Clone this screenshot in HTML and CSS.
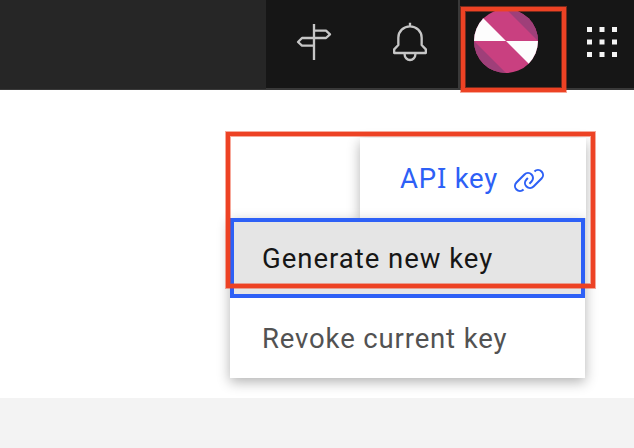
FILE: index.html
```html
<!DOCTYPE html>
<html lang="en">
<head>
<meta charset="utf-8">
<title>API key</title>
<link rel="stylesheet" href="styles.css">
</head>
<body>
<header class="header">
  <nav class="actions">
    <button class="action action-first" aria-label="Directions">
      <svg width="36" height="38" viewBox="108 69 108 114"><path d="M162 72V180M162 92H198L210 103L198 114H126L114 126L126 137H162"/></svg>
    </button>
    <button class="action" aria-label="Notifications">
      <svg width="36" height="40" viewBox="396 67 108 120"><path d="M450 69V81M402.500 160V149L415 136V114a35 34 0 0 1 70 0V136L497.500 149V160ZM434 161v4a16 16 0 0 0 32 0v-4"/></svg>
    </button>
    <button class="action action-user" aria-label="Account">
      <svg class="avatar" width="64" height="64" viewBox="-96 -96 192 192">
        <defs><clipPath id="disc"><circle r="96"/></clipPath></defs>
        <g clip-path="url(#disc)">
          <path fill="#c94080" d="M-96-96H96V96H-96Z"/>
          <path fill="#fdfdfd" d="M0 0H-96V-96ZM0 0H96V96Z"/>
          <path fill="#9f3f79" d="M0-96H96V0ZM-96 0L0 96H-96Z"/>
        </g>
      </svg>
    </button>
    <button class="action action-apps" aria-label="Applications">
      <svg class="dots" width="30" height="30" viewBox="0 0 30 30"><path d="M0 0h5v5H0zM12.500 0h5v5h-5zM25 0h5v5h-5zM0 12.500h5v5H0zM12.500 12.500h5v5h-5zM25 12.500h5v5h-5zM0 25h5v5H0zM12.500 25h5v5h-5zM25 25h5v5h-5z"/></svg>
    </button>
  </nav>
</header>
<main class="content">
  <div class="tab">
    <span class="tab-label">AP<span class="serif-i">I</span> key</span>
    <svg class="link" width="32" height="32" viewBox="0 0 32 32"><path d="M29.250,6.760a6,6,0,0,0-8.500,0l1.420,1.420a4,4,0,1,1,5.670,5.670l-8,8a4,4,0,1,1-5.670-5.660l1.410-1.420-1.410-1.420-1.420,1.420a6,6,0,0,0,0,8.500A6,6,0,0,0,17,25a6,6,0,0,0,4.270-1.760l8-8A6,6,0,0,0,29.250,6.760Z"/><path d="M4.190,24.820a4,4,0,0,1,0-5.670l8-8a4,4,0,0,1,5.670,0A3.940,3.940,0,0,1,19,14a4,4,0,0,1-1.170,2.850L15.710,19l1.420,1.420,2.120-2.120a6,6,0,0,0-8.510-8.510l-8,8a6,6,0,0,0,0,8.510A6,6,0,0,0,7,28a6.070,6.070,0,0,0,4.280-1.760L9.860,24.820A4,4,0,0,1,4.190,24.820Z"/></svg>
  </div>
  <ul class="menu">
    <li class="item item-active"><span class="label-generate">Generate new key</span></li>
    <li class="item"><span class="label-revoke">Revoke current key</span></li>
  </ul>
</main>
<div class="mark mark-avatar"></div>
<div class="mark mark-menu"></div>
</body>
</html>
```
FILE: styles.css
```css
* { box-sizing: border-box; }
body {
  margin: 0;
  height: 448px;
  overflow: hidden;
  background: #f3f3f3;
  font-family: Roboto, "Liberation Sans", sans-serif;
  font-size: 27.500px;
}
.header {
  display: flex;
  justify-content: flex-end;
  height: 90px;
  background: #262626;
  box-shadow: inset 0 -1px #393939;
}
.actions {
  display: flex;
  width: 368px;
  background: #161616;
  border-bottom: 2px solid #393939;
}
.action {
  display: flex;
  justify-content: center;
  width: 96px;
  padding: 23px 0 0;
  border: 0;
  background: none;
}
.action svg { flex: none; }
.action path { stroke-linejoin: round; }
.action-first, .action:nth-child(2) {
  fill: none;
  stroke: #c6c6c6;
  stroke-width: 7;
}
.action:nth-child(2) { padding-top: 22px; }
.action-user {
  width: 98px;
  padding: 9px 0 0 14px;
  justify-content: flex-start;
  border-left: 2px solid #393939;
}
.action-apps {
  width: 78px;
  padding: 27px 0 0 31px;
  justify-content: flex-start;
  fill: #f4f4f4;
}
.content {
  display: flex;
  flex-direction: column;
  height: 308px;
  padding: 48px 48px 0 230px;
  background: #fff;
}
.tab {
  display: flex;
  align-items: center;
  align-self: flex-end;
  width: 226px;
  height: 80px;
  padding-left: 40px;
  background: #fff;
  color: #2d60f6;
  box-shadow: 0 4px 12px rgba(0, 0, 0, .3);
}
.tab-label {
  width: 113px;
  padding-top: 2px;
  line-height: 32px;
  white-space: nowrap;
  letter-spacing: .8px;
}
.serif-i {
  font-family: "Noto Sans", sans-serif;
  line-height: 1;
}
.link {
  margin-top: 4px;
  fill: currentColor;
}
.menu {
  width: 355px;
  height: 160px;
  margin: 0;
  padding: 0;
  list-style: none;
  background: #fff;
  box-shadow: 0 4px 12px rgba(0, 0, 0, .3);
}
.item {
  display: flex;
  align-items: center;
  height: 80px;
  padding-left: 32px;
  color: #525252;
  white-space: nowrap;
}
.item-active {
  padding-left: 28px;
  border: 4px solid #2d60f6;
  background: #e5e5e5;
  color: #161616;
}
.label-generate { letter-spacing: .98px; }
.label-revoke { letter-spacing: .86px; }
.mark {
  position: absolute;
  border: 4px solid #ed4224;
  box-shadow: 0 0 0 1px rgba(237, 66, 36, .45), inset 0 0 0 1px rgba(237, 66, 36, .45);
}
.mark-avatar {
  left: 461px;
  top: 7px;
  width: 105px;
  height: 85px;
}
.mark-menu {
  left: 226px;
  top: 132px;
  width: 369px;
  height: 156px;
}
```
